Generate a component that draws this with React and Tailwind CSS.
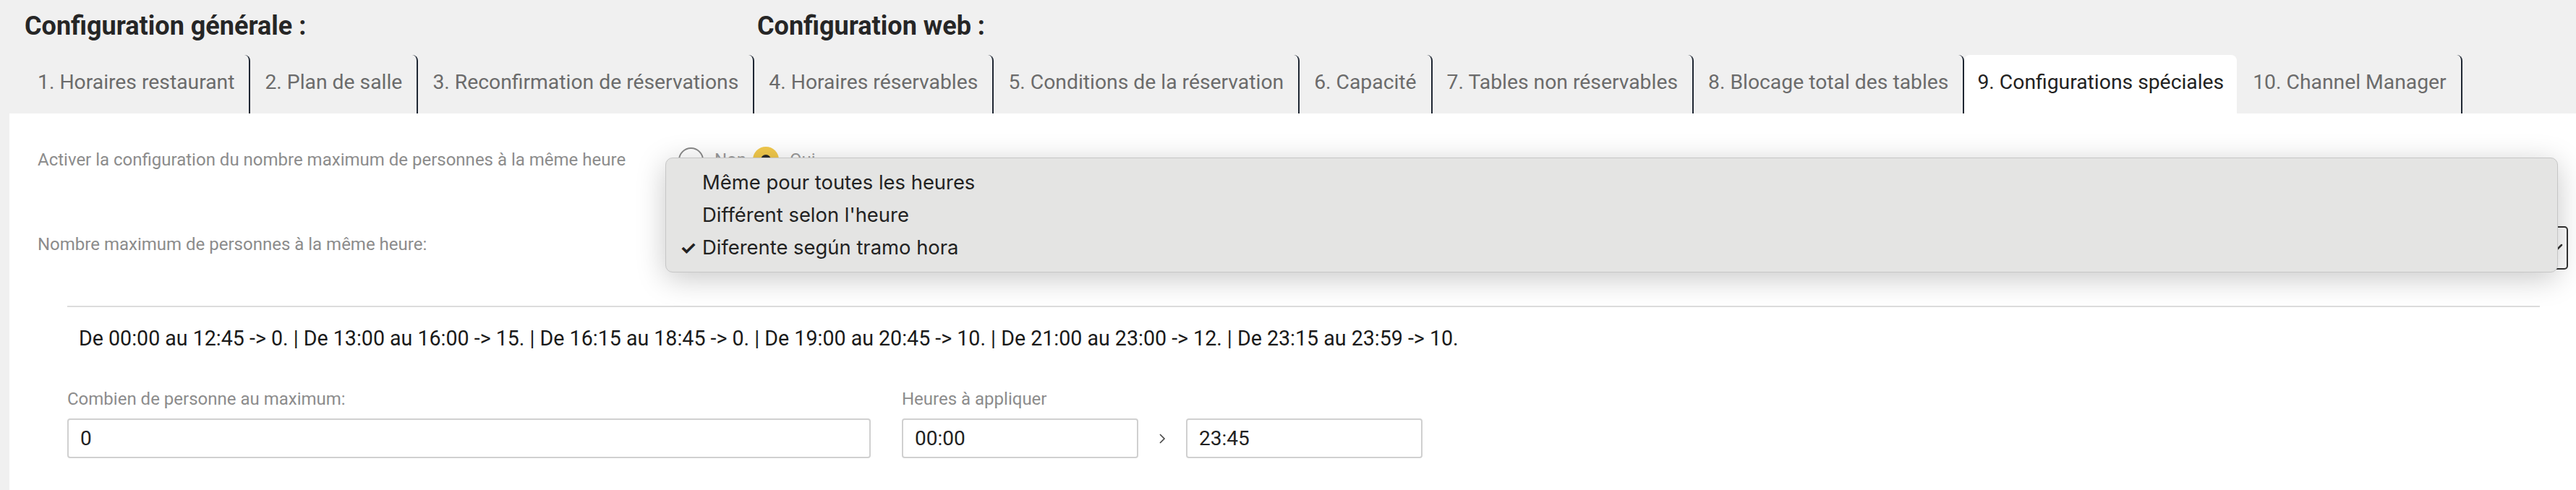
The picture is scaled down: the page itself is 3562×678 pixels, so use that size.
import React from "react";

const tabs = [
  "1. Horaires restaurant",
  "2. Plan de salle",
  "3. Reconfirmation de réservations",
  "4. Horaires réservables",
  "5. Conditions de la réservation",
  "6. Capacité",
  "7. Tables non réservables",
  "8. Blocage total des tables",
  "9. Configurations spéciales",
  "10. Channel Manager",
];

function Tab({ label, active, afterActive }) {
  if (active) {
    return (
      <div className="flex shrink-0 items-center whitespace-nowrap rounded-t-[8px] bg-white px-[18px] pb-[4px] text-[28.3px] leading-none text-[#222]">
        {label}
      </div>
    );
  }
  return (
    <div
      className={
        afterActive
          ? "flex shrink-0 items-center whitespace-nowrap rounded-tr-[8px] border-r-2 border-[#1f2733] pl-[22px] pr-[20px] pb-[4px] text-[28.3px] leading-none text-[#6b6b6b]"
          : "flex shrink-0 items-center whitespace-nowrap rounded-tr-[8px] border-r-2 border-[#1f2733] px-[20px] pb-[4px] text-[28.3px] leading-none text-[#6b6b6b]"
      }
    >
      {label}
    </div>
  );
}

export default function App() {
  const activeIndex = 8;
  return (
    <div className="relative h-[678px] w-[3562px] overflow-hidden bg-[#f0f0f0] font-['Roboto','Liberation_Sans',sans-serif]">
      {/* Headings */}
      <div className="flex h-[76px] pl-[34px] pt-[14px]">
        <h1 className="w-[1013px] shrink-0 whitespace-nowrap text-[36px] font-bold leading-[44px] text-[#262626]">
          Configuration générale :
        </h1>
        <h1 className="whitespace-nowrap text-[36px] font-bold leading-[44px] text-[#262626]">
          Configuration web :
        </h1>
      </div>

      {/* Tabs */}
      <div className="flex h-[81px] pl-[32px]">
        {tabs.map((t, i) => (
          <Tab
            key={t}
            label={t}
            active={i === activeIndex}
            afterActive={i === activeIndex + 1}
          />
        ))}
      </div>

      {/* Panel */}
      <div className="ml-[13px] h-[521px] bg-white">
        <div className="flex flex-col pt-[44px]">
          <div className="flex h-[40px] items-center pl-[39px]">
            <span className="w-[886px] shrink-0 whitespace-nowrap text-[24px] text-[#8c8c8c]">
              Activer la configuration du nombre maximum de personnes à la même heure
            </span>
            <span className="h-[35px] w-[35px] shrink-0 rounded-full border-2 border-[#8a8a8a]" />
            <span className="ml-[15px] text-[24px] text-[#9a9a9a]">Non</span>
            <span className="ml-[9px] flex h-[36px] w-[36px] shrink-0 items-center justify-center rounded-full bg-[#f2c94c]">
              <span className="h-[14px] w-[14px] rounded-full bg-[#2b2b2b]" />
            </span>
            <span className="ml-[15px] text-[24px] text-[#9a9a9a]">Oui</span>
          </div>

          <div className="mt-[72px] flex h-[60px] items-center pl-[39px] pr-[11px]">
            <span className="w-[886px] shrink-0 whitespace-nowrap pb-[10px] text-[24px] text-[#8c8c8c]">
              Nombre maximum de personnes à la même heure:
            </span>
            <div className="relative flex h-[60px] flex-1 items-center rounded-[5px] border-2 border-[#333] pl-[30px] text-[28px] text-[#222]">
              Diferente según tramo hora
              <svg
                className="absolute right-[4px] top-[20px]"
                width="20"
                height="14"
                viewBox="0 0 20 14"
                fill="none"
                stroke="#333"
                strokeWidth="2.5"
                strokeLinecap="round"
              >
                <path d="M3 4 L10 11 L17 4" />
              </svg>
            </div>
          </div>

          <div className="ml-[80px] mr-[50px] mt-[50px] h-[2px] bg-[#dcdcdc]" />

          <p className="ml-[96px] mt-[26px] whitespace-nowrap text-[28.6px] leading-[34px] text-[#1a1a1a]">
            De 00:00 au 12:45 -&gt; 0. | De 13:00 au 16:00 -&gt; 15. | De 16:15 au 18:45 -&gt; 0. | De 19:00 au 20:45 -&gt; 10. | De 21:00 au 23:00 -&gt; 12. | De 23:15 au 23:59 -&gt; 10.
          </p>

          <div className="mt-[53px] flex pl-[80px]">
            <div className="flex w-[1111px] shrink-0 flex-col">
              <span className="text-[24px] leading-[28px] text-[#8c8c8c]">
                Combien de personne au maximum:
              </span>
              <div className="mt-[13px] flex h-[55px] items-center rounded-[4px] border-2 border-[#d0d0d0] pl-[16px] text-[28px] text-[#222]">
                0
              </div>
            </div>
            <div className="ml-[43px] flex flex-col">
              <span className="text-[24px] leading-[28px] text-[#8c8c8c]">
                Heures à appliquer
              </span>
              <div className="mt-[13px] flex items-center">
                <div className="flex h-[55px] w-[327px] items-center rounded-[4px] border-2 border-[#d0d0d0] pl-[16px] text-[28px] text-[#222]">
                  00:00
                </div>
                <div className="flex w-[66px] items-center justify-center">
                  <svg width="10" height="18" viewBox="0 0 10 18" fill="none" stroke="#444" strokeWidth="1.6">
                    <path d="M2 3 L8 9 L2 15" />
                  </svg>
                </div>
                <div className="flex h-[55px] w-[327px] items-center rounded-[4px] border-2 border-[#d0d0d0] pl-[16px] text-[28px] text-[#222]">
                  23:45
                </div>
              </div>
            </div>
          </div>
        </div>
      </div>

      {/* Native select popup */}
      <div className="absolute left-[920px] top-[218px] flex h-[159px] w-[2617px] flex-col rounded-[10px] border border-[#c6c6c6] bg-[#e4e4e3] py-[11px] font-['Inter','Liberation_Sans',sans-serif] text-[27.4px] text-[#222] shadow-[0_8px_40px_rgba(0,0,0,0.22)]">
        <div className="flex h-[45.5px] items-center whitespace-nowrap pl-[50px]">Même pour toutes les heures</div>
        <div className="flex h-[45.5px] items-center whitespace-nowrap pl-[50px]">Différent selon l'heure</div>
        <div className="flex h-[45.5px] items-center whitespace-nowrap">
          <span className="w-[50px] pl-[19px] text-[26px] font-bold">✓</span>
          <span>Diferente según tramo hora</span>
        </div>
      </div>
    </div>
  );
}
